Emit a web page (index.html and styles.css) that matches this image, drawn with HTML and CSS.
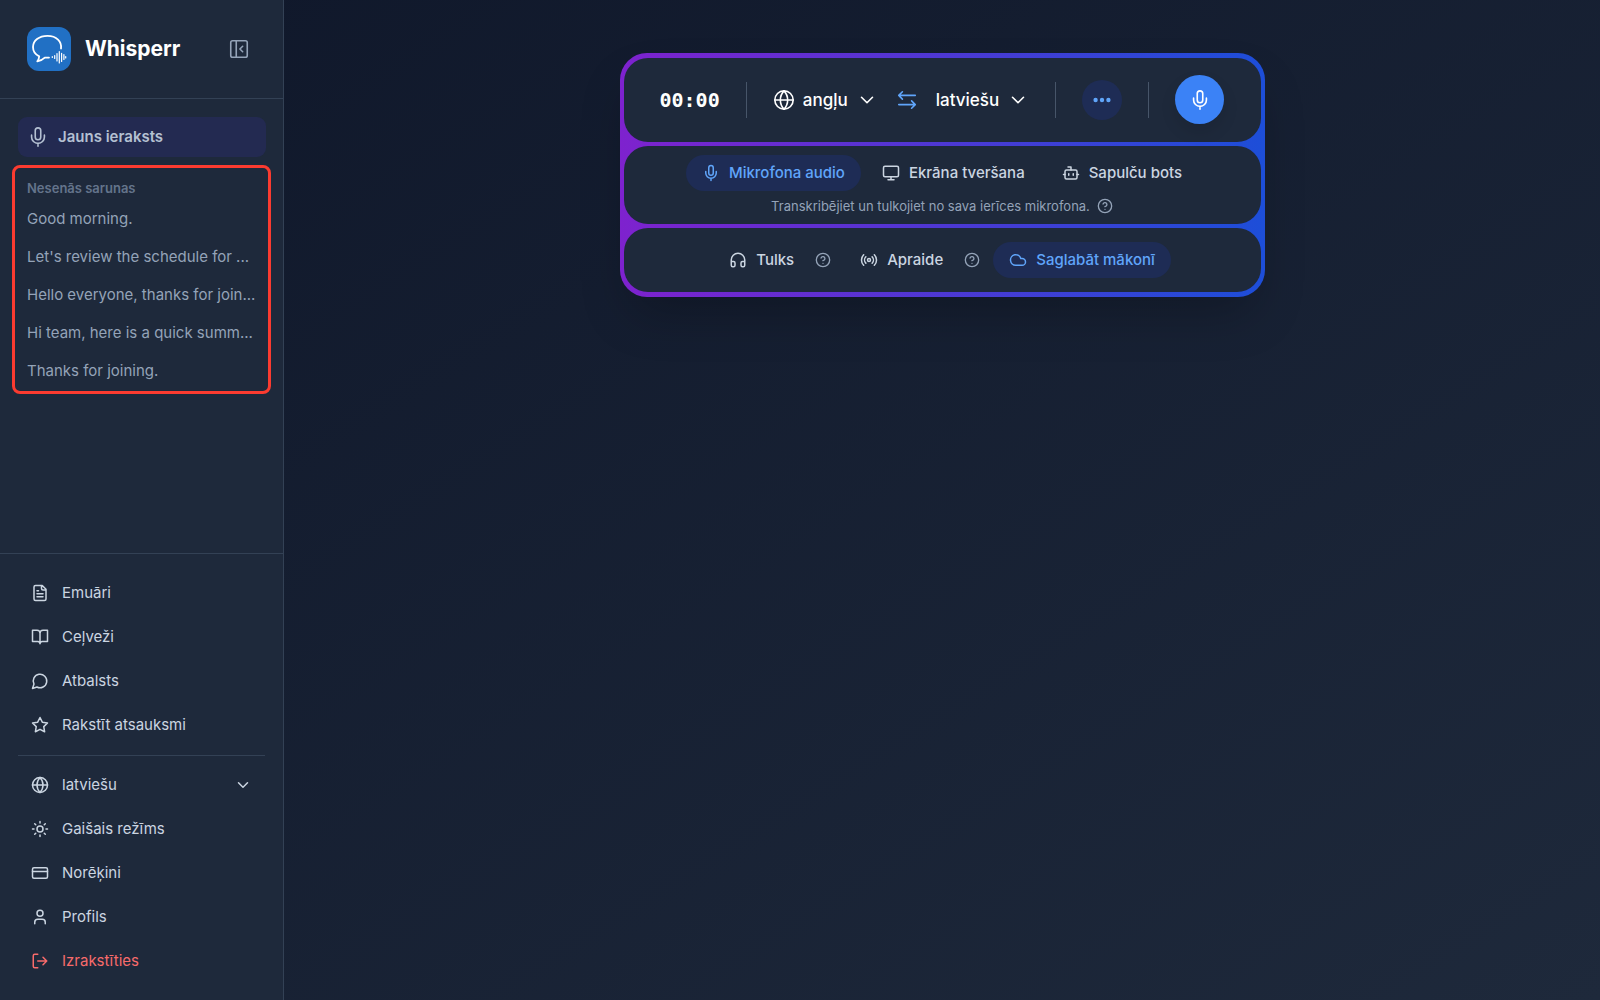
FILE: index.html
```html
<!DOCTYPE html>
<html lang="lv">
<head>
  <meta charset="UTF-8">
  <meta name="viewport" content="width=device-width, initial-scale=1.0">
  <title>Whisperr</title>
  <link rel="stylesheet" href="styles.css">
</head>
<body>
  <!-- Shared icons -->
  <svg class="sprite" aria-hidden="true">
    <symbol id="mic" viewBox="0 0 24 24"><rect x="9" y="2" width="6" height="13" rx="3"/><path d="M19 10v2a7 7 0 0 1-14 0v-2M12 19v3"/></symbol>
    <symbol id="globe" viewBox="0 0 24 24"><circle cx="12" cy="12" r="10"/><path d="M12 2a14.5 14.5 0 0 0 0 20 14.5 14.5 0 0 0 0-20M2 12h20"/></symbol>
    <symbol id="chevron" viewBox="0 0 24 24"><path d="m6 9 6 6 6-6"/></symbol>
    <symbol id="help" viewBox="0 0 24 24"><circle cx="12" cy="12" r="10"/><path d="M9.090 9a3 3 0 0 1 5.830 1c0 2-3 3-3 3M12 17h.01"/></symbol>
  </svg>

  <div class="app">
    <aside class="sidebar">
      <header class="brand">
        <svg class="logo" viewBox="0 0 44 44" aria-hidden="true">
          <rect width="44" height="44" rx="12" fill="#2170c4"/>
          <g fill="none" stroke="#fff" stroke-linecap="round" stroke-linejoin="round">
            <path stroke-width="1.800" d="M34 21.500c1-7-4.500-12.700-13.500-12.700-8.500 0-14.500 4.800-14.500 11.300 0 4.200 2.300 7.500 6.200 9.200-.1 2-.8 3.600-1.900 5 3.200-.4 5.500-1.800 7.500-3.700h4.200"/>
            <path stroke-width="1.200" d="M25.300 29.600v.8M27.700 28.500v3M30 26.500v7.500M32.300 24.500v11.500M34.600 26.300v8.200M36.900 27.500v5M38.700 29.500v1.500"/>
          </g>
        </svg>
        <h1>Whisperr</h1>
        <button class="collapse" type="button" aria-label="Sakļaut sānjoslu">
          <svg class="icon icon-lg" viewBox="0 0 24 24"><rect x="3" y="3" width="18" height="18" rx="2"/><path d="M9 3v18M16 15l-3-3 3-3"/></svg>
        </button>
      </header>

      <div class="records">
        <button class="new-record" type="button">
          <svg class="icon icon-lg"><use href="#mic"/></svg>
          Jauns ieraksts
        </button>
        <section class="recent">
          <h2>Nesenās sarunas</h2>
          <ul>
            <li><a href="#">Good morning.</a></li>
            <li><a href="#">Let's review the schedule for ...</a></li>
            <li><a href="#">Hello everyone, thanks for join...</a></li>
            <li><a href="#">Hi team, here is a quick summ...</a></li>
            <li><a href="#">Thanks for joining.</a></li>
          </ul>
        </section>
      </div>

      <nav class="menu">
        <div class="menu-group">
          <a href="#"><svg class="icon" viewBox="0 0 24 24"><path d="M15 2H6a2 2 0 0 0-2 2v16a2 2 0 0 0 2 2h12a2 2 0 0 0 2-2V7ZM14 2v4a2 2 0 0 0 2 2h4M10 9H8M16 13H8M16 17H8"/></svg>Emuāri</a>
          <a href="#"><svg class="icon" viewBox="0 0 24 24"><path d="M2 3h6a4 4 0 0 1 4 4v14a3 3 0 0 0-3-3H2zM22 3h-6a4 4 0 0 0-4 4v14a3 3 0 0 1 3-3h7z"/></svg>Ceļveži</a>
          <a href="#"><svg class="icon" viewBox="0 0 24 24"><path d="M7.900 20A9 9 0 1 0 4 16.100L2 22Z"/></svg>Atbalsts</a>
          <a href="#"><svg class="icon" viewBox="0 0 24 24"><path d="m12 2 3.090 6.260L22 9.270l-5 4.870 1.180 6.880L12 17.770l-6.180 3.250L7 14.140 2 9.270l6.910-1.010z"/></svg>Rakstīt atsauksmi</a>
        </div>
        <div class="menu-group">
          <label class="menu-select">
            <svg class="icon"><use href="#globe"/></svg>
            <select aria-label="Saskarnes valoda"><option>latviešu</option></select>
            <svg class="icon"><use href="#chevron"/></svg>
          </label>
          <button type="button"><svg class="icon" viewBox="0 0 24 24"><circle cx="12" cy="12" r="4"/><path d="M12 2v2M12 20v2M4.930 4.930l1.410 1.410M17.660 17.660l1.410 1.410M2 12h2M20 12h2M6.340 17.660l-1.410 1.410M19.070 4.930l-1.410 1.410"/></svg>Gaišais režīms</button>
          <a href="#"><svg class="icon" viewBox="0 0 24 24"><rect x="2" y="5" width="20" height="14" rx="2"/><path d="M2 10h20"/></svg>Norēķini</a>
          <a href="#"><svg class="icon" viewBox="0 0 24 24"><circle cx="12" cy="7" r="4"/><path d="M19 21v-2a4 4 0 0 0-4-4H9a4 4 0 0 0-4 4v2"/></svg>Profils</a>
          <button class="logout" type="button"><svg class="icon" viewBox="0 0 24 24"><path d="M9 21H5a2 2 0 0 1-2-2V5a2 2 0 0 1 2-2h4M16 17l5-5-5-5M21 12H9"/></svg>Izrakstīties</button>
        </div>
      </nav>
    </aside>

    <main class="content">
      <section class="recorder">
        <div class="panel controls">
          <time class="timer">00:00</time>
          <span class="divider"></span>
          <div class="languages">
            <label class="language">
              <svg class="icon icon-lg"><use href="#globe"/></svg>
              <select aria-label="Runas valoda"><option>angļu</option></select>
              <svg class="icon icon-lg"><use href="#chevron"/></svg>
            </label>
            <button class="swap" type="button" aria-label="Apmainīt valodas">
              <svg class="icon icon-lg" viewBox="0 0 24 24"><path d="M7 3 3 7l4 4M3 7h18M17 21l4-4-4-4M21 17H3"/></svg>
            </button>
            <label class="language">
              <select aria-label="Tulkojuma valoda"><option>latviešu</option></select>
              <svg class="icon icon-lg"><use href="#chevron"/></svg>
            </label>
          </div>
          <span class="divider"></span>
          <button class="more" type="button" aria-label="Vairāk">
            <svg class="icon icon-lg" viewBox="0 0 24 24"><circle cx="5" cy="12" r="1.500"/><circle cx="12" cy="12" r="1.500"/><circle cx="19" cy="12" r="1.500"/></svg>
          </button>
          <span class="divider"></span>
          <button class="record" type="button" aria-label="Ierakstīt">
            <svg class="icon icon-lg"><use href="#mic"/></svg>
          </button>
        </div>

        <div class="panel sources">
          <div class="tabs">
            <button class="pill active" type="button"><svg class="icon"><use href="#mic"/></svg>Mikrofona audio</button>
            <button class="pill" type="button"><svg class="icon" viewBox="0 0 24 24"><rect x="2" y="3" width="20" height="14" rx="2"/><path d="M8 21h8M12 17v4"/></svg>Ekrāna tveršana</button>
            <button class="pill" type="button"><svg class="icon" viewBox="0 0 24 24"><rect x="4" y="8" width="16" height="12" rx="2"/><path d="M12 8V4H8M2 14h2M20 14h2M15 13v2M9 13v2"/></svg>Sapulču bots</button>
          </div>
          <p class="hint">Transkribējiet un tulkojiet no sava ierīces mikrofona.
            <button class="help" type="button" aria-label="Palīdzība"><svg class="icon icon-sm"><use href="#help"/></svg></button>
          </p>
        </div>

        <div class="panel options">
          <div class="option">
            <button class="pill" type="button"><svg class="icon" viewBox="0 0 24 24"><path d="M3 14h3a2 2 0 0 1 2 2v3a2 2 0 0 1-2 2H5a2 2 0 0 1-2-2v-7a9 9 0 0 1 18 0v7a2 2 0 0 1-2 2h-1a2 2 0 0 1-2-2v-3a2 2 0 0 1 2-2h3"/></svg>Tulks</button>
            <button class="help" type="button" aria-label="Par tulku"><svg class="icon icon-sm"><use href="#help"/></svg></button>
          </div>
          <div class="option">
            <button class="pill" type="button"><svg class="icon" viewBox="0 0 24 24"><circle cx="12" cy="12" r="2"/><path d="M4.900 19.100C1 15.200 1 8.800 4.900 4.900M7.800 16.200c-2.300-2.300-2.300-6.100 0-8.500M16.200 7.800c2.300 2.300 2.300 6.100 0 8.500M19.100 4.900C23 8.800 23 15.100 19.100 19"/></svg>Apraide</button>
            <button class="help" type="button" aria-label="Par apraidi"><svg class="icon icon-sm"><use href="#help"/></svg></button>
          </div>
          <button class="pill active" type="button"><svg class="icon" viewBox="0 0 24 24"><path d="M17.500 19H9a7 7 0 1 1 6.710-9h1.790a4.500 4.500 0 1 1 0 9Z"/></svg>Saglabāt mākonī</button>
        </div>
      </section>
    </main>
  </div>
</body>
</html>
```
FILE: styles.css
```css
* {
  box-sizing: border-box;
}

body {
  margin: 0;
  font-family: Inter, "Liberation Sans", sans-serif;
  font-size: 15px;
  line-height: 24px;
  color: #cbd5e1;
  background: #0f172a;
}

h1, h2, p, ul {
  margin: 0;
  padding: 0;
}

button, select {
  margin: 0;
  padding: 0;
  border: none;
  background: none;
  color: inherit;
  font: inherit;
  cursor: pointer;
}

select {
  appearance: none;
  field-sizing: content;
}

a {
  color: inherit;
  text-decoration: none;
}

.sprite {
  display: none;
}

.icon {
  flex: none;
  width: 18px;
  height: 18px;
  fill: none;
  stroke: currentColor;
  stroke-width: 2;
  stroke-linecap: round;
  stroke-linejoin: round;
}

.icon-sm {
  width: 16px;
  height: 16px;
}

.icon-lg {
  width: 22px;
  height: 22px;
  stroke-width: 1.75;
}

.app {
  display: flex;
  min-height: 100vh;
  background: linear-gradient(to bottom right, #0f172a, #1e293b);
}

/* Sidebar */
.sidebar {
  display: flex;
  flex-direction: column;
  flex: none;
  width: 284px;
  background: #1e293b;
  border-right: 1px solid #334155;
}

.brand {
  display: flex;
  align-items: center;
  gap: 14px;
  padding: 27px 33px 27px 27px;
  border-bottom: 1px solid #334155;
}

.logo {
  width: 44px;
  height: 44px;
}

.brand h1 {
  flex: 1;
  font-size: 21px;
  line-height: 32px;
  font-weight: 700;
  color: #fff;
}

.collapse {
  display: flex;
  color: #94a3b8;
}

.records {
  flex: 1;
  padding: 18px 12px 0;
}

.new-record {
  display: flex;
  align-items: center;
  gap: 9px;
  width: 248px;
  height: 40px;
  margin-left: 6px;
  padding: 0 9px;
  border-radius: 9px;
  background: #232a51;
  font-weight: 600;
  color: #b4c0d2;
}

.recent {
  margin-top: 8px;
  padding: 10px 12px 1px;
  border: 3px solid #fb3b30;
  border-radius: 8px;
}

.recent h2 {
  font-size: 13px;
  line-height: 20px;
  font-weight: 600;
  color: #64748b;
}

.recent ul {
  list-style: none;
  padding-top: 2px;
}

.recent a {
  display: block;
  line-height: 38px;
  white-space: nowrap;
  color: #94a3b8;
}

.menu {
  padding: 17px 18px;
  border-top: 1px solid #334155;
}

.menu-group a,
.menu-group button,
.menu-select {
  display: flex;
  align-items: center;
  gap: 13px;
  width: 100%;
  height: 44px;
  padding: 0 13px;
}

.menu-group + .menu-group {
  margin-top: 8px;
  padding-top: 7px;
  border-top: 1px solid #334155;
}

.menu-select select {
  flex: 1;
}

.menu .logout {
  color: #f86b6b;
}

/* Recorder */
.content {
  flex: 1;
  padding: 53px 24px;
}

.recorder {
  display: flex;
  flex-direction: column;
  gap: 4px;
  max-width: 645px;
  margin: 0 auto;
  padding: 5px 4px;
  border-radius: 27px;
  background: linear-gradient(to right, #7e22ce, #1d4ed8);
  box-shadow: 0 25px 50px -12px rgba(0, 0, 0, 0.25);
}

.panel {
  display: flex;
  align-items: center;
  justify-content: center;
  border-radius: 24px;
  background: #1e293b;
}

.controls {
  justify-content: space-between;
  padding: 17px 36px 18px;
  color: #fff;
}

.timer {
  font-family: "DejaVu Sans Mono", monospace;
  font-size: 20px;
  font-weight: 700;
}

.divider {
  width: 1px;
  height: 36px;
  background: #475569;
}

.languages {
  display: flex;
  align-items: center;
  gap: 18px;
}

.language {
  display: flex;
  align-items: center;
  gap: 8px;
  font-size: 17px;
  font-weight: 500;
}

.swap {
  display: flex;
  color: #60a5fa;
}

.more,
.record {
  display: flex;
  align-items: center;
  justify-content: center;
  border-radius: 50%;
}

.more {
  width: 40px;
  height: 40px;
  background: #1e2c55;
  color: #60a5fa;
}

.more .icon {
  fill: currentColor;
}

.record {
  width: 49px;
  height: 49px;
  background: #3b82f6;
  box-shadow: 0 8px 16px rgba(0, 0, 0, 0.1);
}

.sources {
  flex-direction: column;
  gap: 6px;
  padding: 9px;
}

.tabs {
  display: flex;
  gap: 5px;
}

.pill {
  display: flex;
  align-items: center;
  gap: 9px;
  height: 36px;
  padding: 0 16px;
  border-radius: 18px;
  font-weight: 500;
}

.pill.active {
  background: #1e2c55;
  color: #60a5fa;
}

.hint {
  display: flex;
  align-items: center;
  gap: 7px;
  font-size: 13px;
  line-height: 18px;
  color: #94a3b8;
}

.help {
  display: flex;
  color: #94a3b8;
}

.options {
  gap: 13px;
  padding: 14px;
}

.option {
  display: flex;
  align-items: center;
  gap: 5px;
}
```
